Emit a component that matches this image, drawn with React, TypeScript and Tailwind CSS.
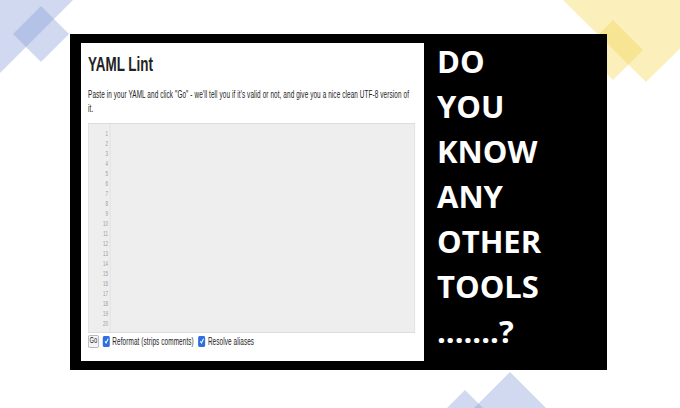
import React from "react";

function Check() {
  return (
    <span className="inline-flex items-center justify-center w-[11px] h-[11px] rounded-[2px] bg-[#2f6fe0]">
      <svg width="8" height="8" viewBox="0 0 8 8">
        <path d="M1.5 4.2 L3.2 6 L6.5 1.8" stroke="white" strokeWidth="1.4" fill="none" />
      </svg>
    </span>
  );
}

export default function App() {
  const lines = Array.from({ length: 20 }, (_, i) => i + 1);
  return (
    <div className="relative w-[680px] h-[408px] bg-white overflow-hidden">
      <svg className="absolute inset-0" width="680" height="408" viewBox="0 0 680 408">
        <g fill="#8c9fd9" fillOpacity="0.4">
          <polygon points="0,0 73,0 0,73" />
          <polygon points="41,6 69,34 41,62 13,34" />
          <polygon points="510,372 560,422 510,472 460,422" />
          <polygon points="465,390 500,425 465,460 430,425" />
        </g>
        <g fill="#f5d658" fillOpacity="0.4">
          <polygon points="563,0 729,0 646,82" />
          <polygon points="613,20 643,50 613,80 583,50" />
        </g>
      </svg>
      <div className="relative pt-[34px] pl-[70px]">
        <div className="flex w-[537px] h-[336px] bg-black">
          <div className="ml-[11px] mt-[9px] w-[343px] h-[318px] shrink-0 bg-white overflow-hidden">
            <div
              className="w-[536px] origin-top-left scale-x-[0.64] pl-[11px] pt-[10px] text-[#222]"
              style={{ fontFamily: '"Liberation Sans", Arial, sans-serif' }}
            >
              <div className="text-[21px] leading-[21px] font-bold">YAML Lint</div>
              <div className="mt-[14px] text-[10px] leading-[14px] tracking-[0.15px] whitespace-nowrap">
                Paste in your YAML and click "Go" - we'll tell you if it's valid or not, and give you a nice clean UTF-8 version of
                <br />
                it.
              </div>
              <div className="mt-[7px] w-[511px] h-[210px] bg-[#eeeeee] border border-[#dddddd] flex">
                <div className="w-[34px] h-full border-r border-[#dddddd] pt-[5px] pr-[3px] flex flex-col items-end">
                  {lines.map((n) => (
                    <div key={n} className="h-[10px] leading-[10px] text-[7px] text-[#9a9a9a]">
                      {n}
                    </div>
                  ))}
                </div>
              </div>
              <div className="mt-[1px] flex items-center h-[14px] text-[10px] tracking-[0.15px] text-[#222]">
                <span className="inline-flex items-center justify-center w-[17px] h-[13px] border border-[#aaaaaa] bg-[#f4f4f4] rounded-[2px] text-[9px]">
                  Go
                </span>
                <span className="ml-[6px] flex"><Check /></span>
                <span className="ml-[4px]">Reformat (strips comments)</span>
                <span className="ml-[7px] flex"><Check /></span>
                <span className="ml-[4px]">Resolve aliases</span>
              </div>
            </div>
          </div>
          <div
            className="ml-[13px] pt-[5px] flex flex-col text-white font-bold text-[31px] leading-[45px]"
            style={{ fontFamily: '"Open Sans", sans-serif' }}
          >
            <div>DO</div>
            <div>YOU</div>
            <div>KNOW</div>
            <div>ANY</div>
            <div>OTHER</div>
            <div>TOOLS</div>
            <div>.......?</div>
          </div>
        </div>
      </div>
    </div>
  );
}
